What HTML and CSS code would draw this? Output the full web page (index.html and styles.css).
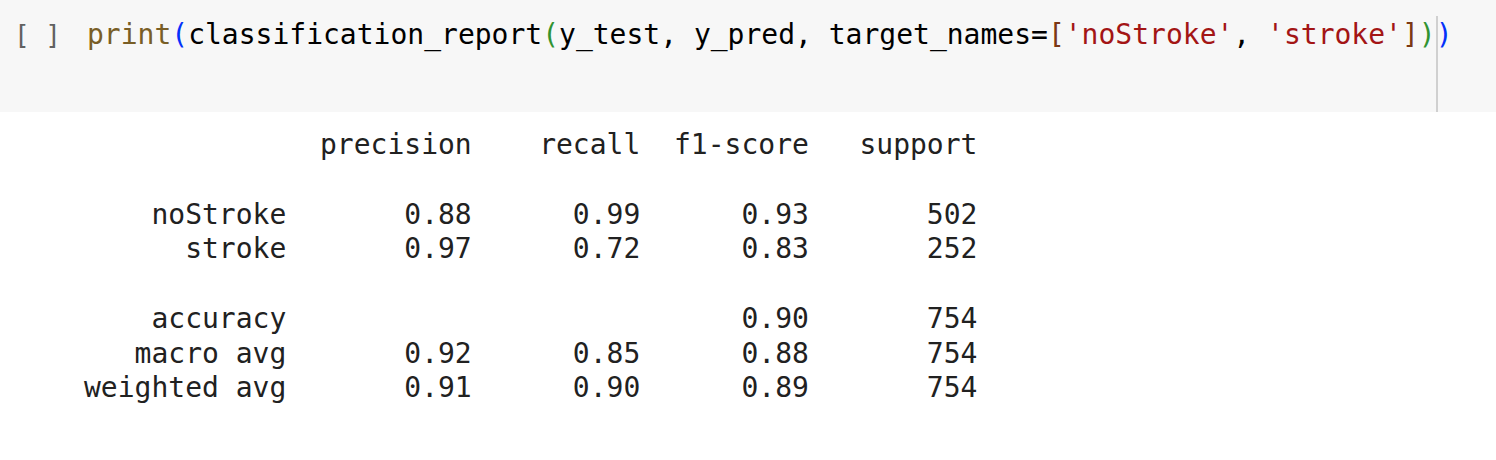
FILE: index.html
```html
<!DOCTYPE html>
<html>
<head>
<meta charset="utf-8">
<link rel="stylesheet" href="styles.css">
</head>
<body>
<div class="cell">
  <div class="prompt">[ ]</div>
  <div class="editor">
    <div class="ruler"></div>
    <div class="code"><span class="fn">print</span><span class="b1">(</span>classification_report<span class="b2">(</span>y_test, y_pred, target_names=<span class="b3">[</span><span class="str">'noStroke'</span>, <span class="str">'stroke'</span><span class="b3">]</span><span class="b2">)</span><span class="b1">)</span></div>
  </div>
</div>
<div class="output">
<pre class="report">              precision    recall  f1-score   support

    noStroke       0.88      0.99      0.93       502
      stroke       0.97      0.72      0.83       252

    accuracy                           0.90       754
   macro avg       0.92      0.85      0.88       754
weighted avg       0.91      0.90      0.89       754
</pre>
</div>
</body>
</html>
```
FILE: styles.css
```css
html, body {
  margin: 0;
  padding: 0;
  background: #ffffff;
}

body {
  font-family: "DejaVu Sans Mono", "Liberation Mono", monospace;
  width: 1496px;
  height: 460px;
  overflow: hidden;
}

.cell {
  background: #f7f7f7;
  height: 112px;
  display: flex;
  align-items: flex-start;
  box-sizing: border-box;
  padding-top: 18px;
}

.prompt {
  width: 87px;
  padding-left: 14px;
  box-sizing: border-box;
  font-size: 26px;
  line-height: 34.75px;
  color: #616161;
  white-space: pre;
}

.editor {
  position: relative;
  flex: 1;
  height: 94px;
  font-size: 28px;
}

.ruler {
  position: absolute;
  left: 80ch;
  top: -2px;
  bottom: 0;
  width: 2px;
  background: #d0d0d0;
}

.code {
  font-size: 28px;
  line-height: 34.75px;
  color: #000000;
  white-space: pre;
}

.fn { color: #795e26; }
.b1 { color: #0431fa; }
.b2 { color: #319331; }
.b3 { color: #7b3814; }
.str { color: #a31515; }

.output {
  padding: 16px 0 0 84px;
}

.report {
  margin: 0;
  font-family: "DejaVu Sans Mono", "Liberation Mono", monospace;
  font-size: 28px;
  line-height: 34.75px;
  color: #212121;
}
```
